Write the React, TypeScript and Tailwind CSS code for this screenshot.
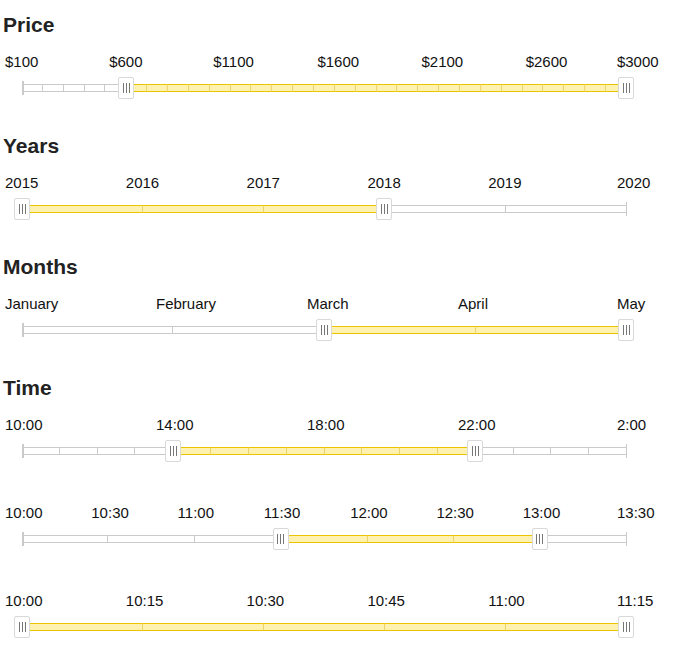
import React from "react";

const TRACK_LEFT = 22;
const TRACK_WIDTH = 604;

type SliderProps = {
  labels: string[];
  // label positions as a fraction of the track (defaults to evenly spread)
  stops?: number[];
  ticks: number;
  from: number;
  to: number;
};

function Handle({ at }: { at: number }) {
  return (
    <div
      className="absolute top-0 z-20 flex h-[22px] w-[16px] items-center justify-center gap-[2px] rounded-[2px] border border-[#d9d9d9] bg-white"
      style={{ left: TRACK_LEFT + (at * TRACK_WIDTH) - 8 }}
    >
      <span className="h-[10px] w-px bg-[#777]" />
      <span className="h-[10px] w-px bg-[#777]" />
      <span className="h-[10px] w-px bg-[#777]" />
    </div>
  );
}

function RangeSlider({ labels, stops, ticks, from, to }: SliderProps) {
  const n = labels.length - 1;
  const fr = stops ?? labels.map((_, i) => i / n);
  // first labels hang 17px left of their stop, the last one sits at 617
  const lefts = fr.map((f, i) => (i === n ? 617 : 5 + f * TRACK_WIDTH));

  return (
    <div>
      <div className="flex h-[18px] pl-[5px] text-[15px] leading-[18px] text-[#111]">
        {labels.map((l, i) => (
          <span
            key={l + i}
            className="shrink-0 whitespace-nowrap"
            style={i < n ? { width: lefts[i + 1] - lefts[i] } : undefined}
          >
            {l}
          </span>
        ))}
      </div>

      <div className="relative mt-[6px] h-[22px]">
        <div className="flex h-full items-center pl-[22px]">
          <span className="relative z-10 h-[14px] w-[2px] shrink-0 bg-[#cacaca]" />
          <div className="-ml-[2px] flex h-[8px] w-[604px] shrink-0">
            {Array.from({ length: ticks }, (_, i) => {
              const on = i >= from && i < to;
              const goldTick = on && i > from;
              return (
                <span
                  key={i}
                  className={`flex-1 border-y ${
                    on ? "border-[#ebc400] bg-[#fff2b0]" : "border-[#cacaca] bg-white"
                  } ${i > 0 ? "border-l" : ""} ${
                    i > 0 ? (goldTick ? "border-l-[#ecd46a]" : "border-l-[#cacaca]") : ""
                  }`}
                />
              );
            })}
          </div>
          <span className="h-[14px] w-px shrink-0 bg-[#cacaca]" />
        </div>

        <Handle at={from / ticks} />
        <Handle at={to / ticks} />
      </div>
    </div>
  );
}

function Section({
  title,
  children,
}: {
  title: string;
  children: React.ReactNode;
}) {
  return (
    <section className="mb-[35px]">
      <h2 className="pl-[3px] text-[21px] font-bold leading-[24px] text-[#222]">
        {title}
      </h2>
      <div className="mt-[16px] flex flex-col">{children}</div>
    </section>
  );
}

const priceStops = [100, 600, 1100, 1600, 2100, 2600, 3000].map(
  (v) => (v - 100) / 2900
);

export default function App() {
  return (
    <div
      className="h-[658px] w-[684px] overflow-hidden bg-white pt-[13px]"
      style={{ fontFamily: '"Liberation Sans", Arial, sans-serif' }}
    >
      <Section title="Price">
        <RangeSlider
          labels={["$100", "$600", "$1100", "$1600", "$2100", "$2600", "$3000"]}
          stops={priceStops}
          ticks={29}
          from={5}
          to={29}
        />
      </Section>

      <Section title="Years">
        <RangeSlider
          labels={["2015", "2016", "2017", "2018", "2019", "2020"]}
          ticks={5}
          from={0}
          to={3}
        />
      </Section>

      <Section title="Months">
        <RangeSlider
          labels={["January", "February", "March", "April", "May"]}
          ticks={4}
          from={2}
          to={4}
        />
      </Section>

      <Section title="Time">
        <div className="flex flex-col gap-[42px]">
          <RangeSlider
            labels={["10:00", "14:00", "18:00", "22:00", "2:00"]}
            ticks={16}
            from={4}
            to={12}
          />
          <RangeSlider
            labels={["10:00", "10:30", "11:00", "11:30", "12:00", "12:30", "13:00", "13:30"]}
            ticks={7}
            from={3}
            to={6}
          />
          <RangeSlider
            labels={["10:00", "10:15", "10:30", "10:45", "11:00", "11:15"]}
            ticks={5}
            from={0}
            to={5}
          />
        </div>
      </Section>
    </div>
  );
}
